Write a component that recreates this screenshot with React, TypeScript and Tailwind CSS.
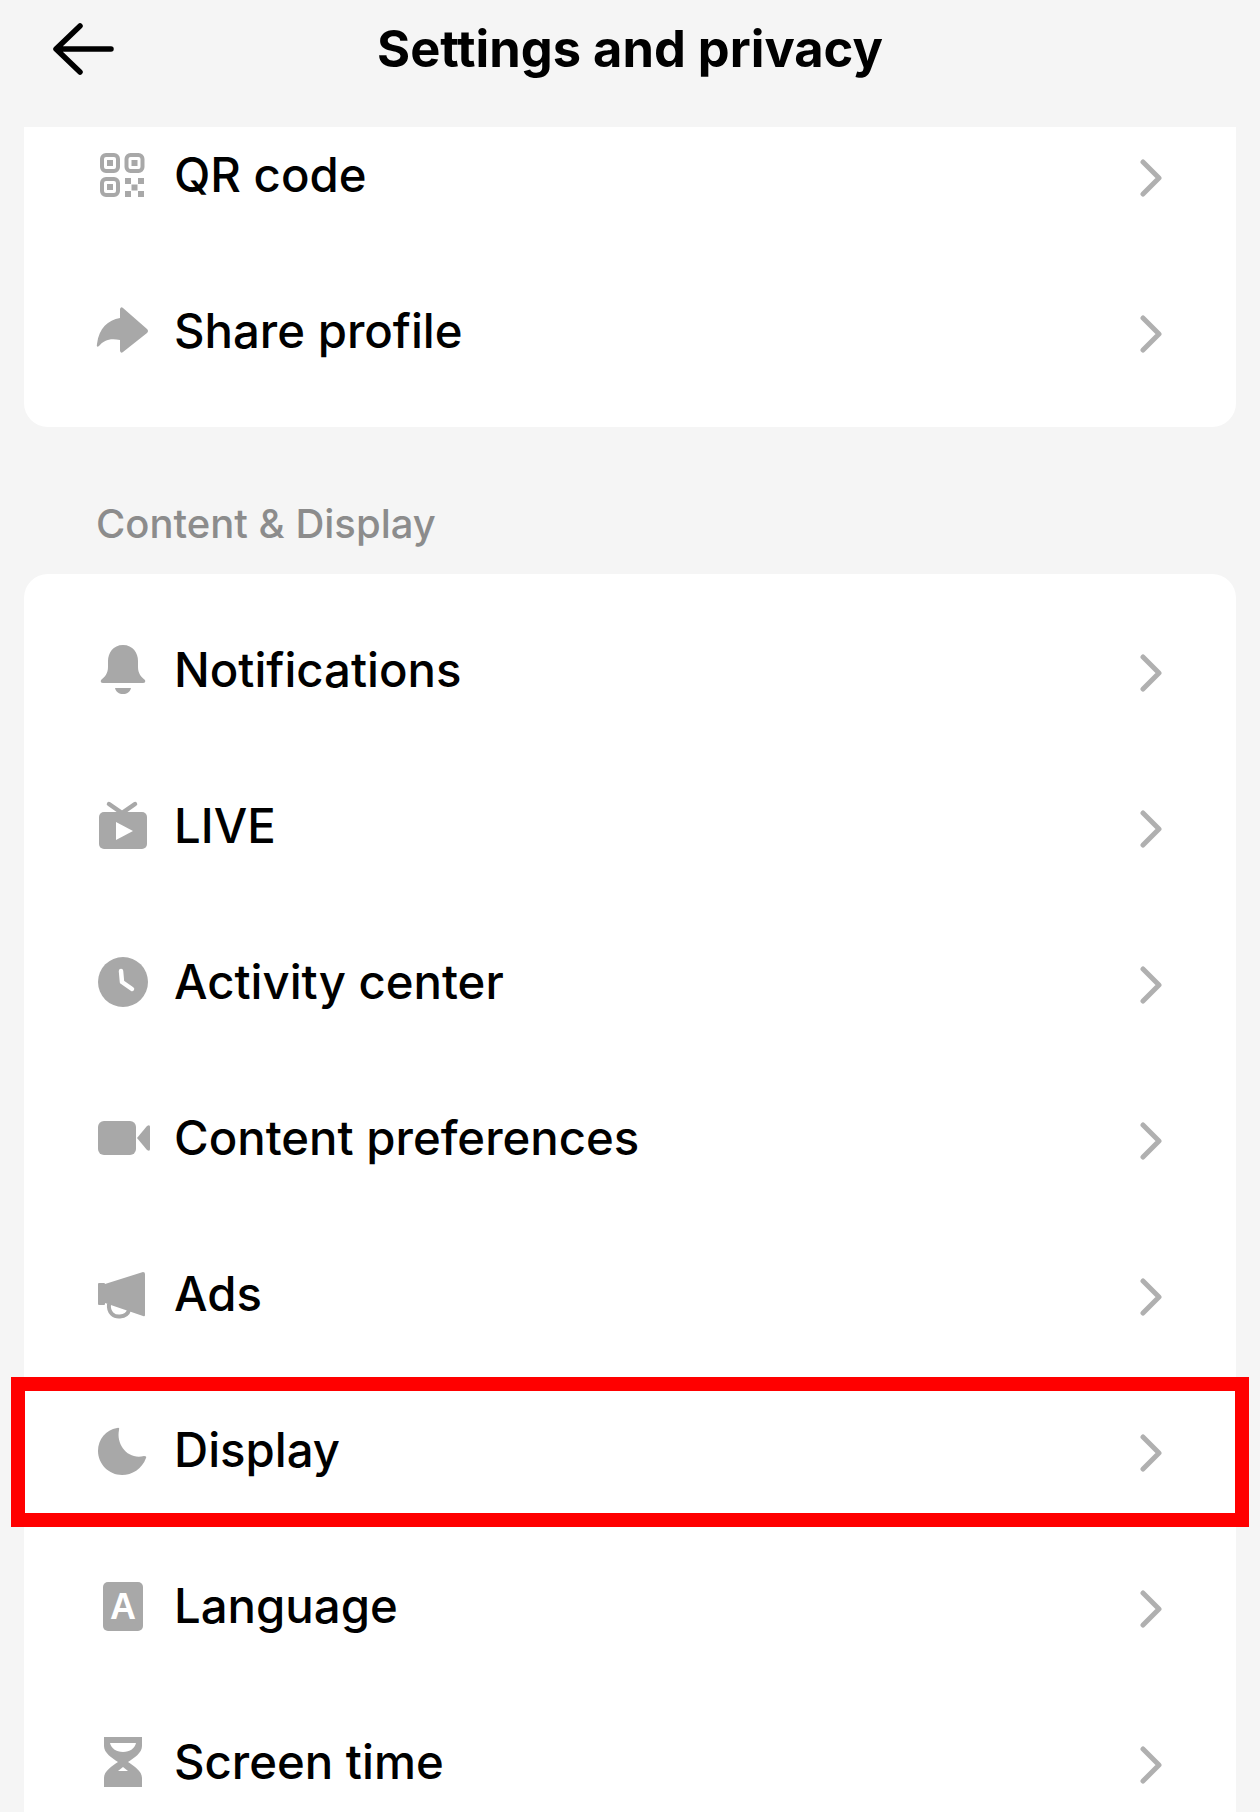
import type { ReactNode } from 'react'

const gray = '#a8a8a8'

function Chevron() {
  return (
    <svg width="24" height="38" viewBox="0 0 24 38" fill="none" className="mt-[3px] shrink-0">
      <path d="M3 3 L19 19 L3 35" stroke="#b0b0b0" strokeWidth="5" strokeLinecap="round" strokeLinejoin="round" />
    </svg>
  )
}

function Icon({ children }: { children: ReactNode }) {
  return (
    <svg width="52" height="52" viewBox="0 0 52 52" fill={gray} className="shrink-0 overflow-visible">
      {children}
    </svg>
  )
}

const QrIcon = (
  <Icon>
    <g fill="none" stroke={gray} strokeWidth="4">
      <rect x="6" y="5" width="16" height="16" rx="4" />
      <rect x="30.5" y="5" width="16" height="16" rx="4" />
      <rect x="6" y="29" width="16" height="16" rx="4" />
    </g>
    <rect x="11" y="10" width="6" height="6" />
    <rect x="35.5" y="10" width="6" height="6" />
    <rect x="11" y="34" width="6" height="6" />
    <rect x="29" y="28" width="6" height="6" />
    <rect x="42" y="28" width="6" height="6" />
    <rect x="35.5" y="34.5" width="6" height="6" />
    <rect x="29" y="41" width="6" height="6" />
    <rect x="42" y="41" width="6" height="6" />
  </Icon>
)

const ShareIcon = (
  <Icon>
    <path d="M24 3 Q25 0 27 2 L51 23 Q53 25 51 27 L27 46 Q25 48 24 45 L24 34 C14 32 8 34 3 40 Q0 42 1 38 C3 22 12 14 24 12 Z" />
  </Icon>
)

const BellIcon = (
  <Icon>
    <path d="M27 0 C17 0 12 8 12 16 L12 22 C12 28 9 32 5 35 Q4 38 7 38 L47 38 Q50 38 49 35 C45 32 42 28 42 22 L42 16 C42 8 37 0 27 0 Z" />
    <path d="M19 43 H35 C34 47 31 49 27 49 C23 49 20 47 19 43 Z" />
  </Icon>
)

const TvIcon = (
  <Icon>
    <path d="M13 3 L26 12 L39 3" fill="none" stroke={gray} strokeWidth="4.5" strokeLinecap="round" />
    <rect x="3" y="11" width="48" height="37" rx="5" />
    <path d="M20 21 L37 30 L20 39 Z" fill="#fff" />
  </Icon>
)

const ClockIcon = (
  <Icon>
    <circle cx="27" cy="25" r="25" />
    <path d="M25 14 L26 25 L36 32" fill="none" stroke="#fff" strokeWidth="4.5" strokeLinecap="round" strokeLinejoin="round" />
  </Icon>
)

const VideoIcon = (
  <Icon>
    <rect x="2" y="8" width="38" height="34" rx="6" />
    <path d="M41 25 L51 13 Q54 11 54 14 V36 Q54 39 51 37 Z" />
  </Icon>
)

const AdsIcon = (
  <Icon>
    <rect x="2" y="14" width="7" height="22" rx="1" />
    <path d="M9 15 L47 3 Q49 3 49 5 V46 Q49 48 47 47 L9 34 Z" />
    <path d="M13 35 C12 44 18 48 24 47.5 C29 47 32 45 33 41" fill="none" stroke={gray} strokeWidth="4" />
  </Icon>
)

const MoonIcon = (
  <Icon>
    <path d="M21 3 Q24 2 23 5 C20 20 32 35 48 31 Q51 31 50 33 C46 44 36 50 26 50 C13 50 2 39 2 26 C2 14 10 5 21 3 Z" />
  </Icon>
)

const LangIcon = (
  <Icon>
    <rect x="7" y="1" width="40" height="49" rx="5" />
    <text x="27" y="38" textAnchor="middle" fill="#fff" fontSize="36" fontWeight="700" fontFamily="Liberation Sans, sans-serif">A</text>
  </Icon>
)

const HourglassIcon = (
  <Icon>
    <path d="M8 0 H46 V9 C46 16 38 21 32 25 C38 29 46 34 46 41 V50 H8 V41 C8 34 16 29 22 25 C16 21 8 16 8 9 Z" />
    <path d="M14 6 H40 C39 11 34 15 27 15 C20 15 15 11 14 6 Z" fill="#fff" />
    <path d="M22 34 L27 30 L32 34 Z" fill="#fff" />
  </Icon>
)

function Row({ icon, label, marked, className = '' }: { icon: ReactNode; label: string; marked?: boolean; className?: string }) {
  return (
    <div className={`relative flex h-[156px] items-center pl-[72px] pr-[72px] ${className}`}>
      {icon}
      <span className="ml-[26px] flex-1 pb-[3px] text-[47.3px] font-medium leading-none text-black">{label}</span>
      <Chevron />
      {marked && <div className="absolute -left-[13px] top-[4px] h-[150px] w-[1238px] border-[14px] border-[#ff0000]" />}
    </div>
  )
}

export default function App() {
  return (
    <div className="h-[1812px] w-[1260px] overflow-hidden bg-[#f5f5f5] font-['Inter',sans-serif]">
      <header className="grid h-[127px] grid-cols-[1fr_auto_1fr] items-center pb-[29px]">
        <svg width="62" height="52" viewBox="0 0 62 52" fill="none" className="ml-[53px]">
          <path d="M4 26 H58 M27 3 L3 26 L27 49" stroke="#000" strokeWidth="5.5" strokeLinecap="round" strokeLinejoin="round" />
        </svg>
        <h1 className="text-[50.6px] font-bold leading-none text-black">Settings and privacy</h1>
      </header>

      <section className="mx-[24px] h-[300px] overflow-hidden rounded-b-[24px] bg-white">
        <Row icon={QrIcon} label="QR code" className="-mt-[29px]" />
        <Row icon={ShareIcon} label="Share profile" />
      </section>

      <div className="flex h-[147px] items-center pl-[96px] pt-[47px] text-[40px] font-medium leading-none text-[#8c8c8c]">
        Content &amp; Display
      </div>

      <section className="mx-[24px] rounded-[24px] bg-white pt-[19px] pb-[40px]">
        <Row icon={BellIcon} label="Notifications" />
        <Row icon={TvIcon} label="LIVE" />
        <Row icon={ClockIcon} label="Activity center" />
        <Row icon={VideoIcon} label="Content preferences" />
        <Row icon={AdsIcon} label="Ads" />
        <Row icon={MoonIcon} label="Display" marked />
        <Row icon={LangIcon} label="Language" />
        <Row icon={HourglassIcon} label="Screen time" />
      </section>
    </div>
  )
}
